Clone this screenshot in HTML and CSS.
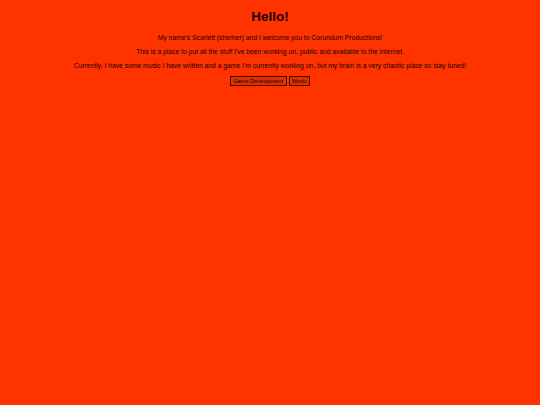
FILE: index.html
```html
<!DOCTYPE html>
<html>
<head>
<meta charset="utf-8">
<title>Corundum Productions</title>
<link rel="stylesheet" href="styles.css">
</head>
<body>
<main class="page">
  <h1 class="title">Hello!</h1>
  <p class="text">My name's Scarlett (she/her) and I welcome you to Corundum Productions!</p>
  <p class="text">This is a place to put all the stuff I've been working on, public and available to the internet.</p>
  <p class="text">Currently, I have some music I have written and a game I'm currently working on, but my brain is a very chaotic place so stay tuned!</p>
  <div class="links">
    <button class="btn">Game Development</button>
    <button class="btn">Music</button>
  </div>
</main>
</body>
</html>
```

FILE: styles.css
```css
html, body {
  background: #ff3300;
}
body {
  margin: 3.375px;
  font-family: "Liberation Sans", Arial, sans-serif;
  color: #1a0000;
  text-align: center;
}
.title {
  font-size: 13.5px;
  font-weight: bold;
  margin: 6px 0 9.5px;
}
.text {
  font-size: 6.75px;
  margin: 7.2px 0;
}
.links {
  display: flex;
  justify-content: center;
  gap: 2px;
}
.btn {
  font-family: "Liberation Sans", Arial, sans-serif;
  font-size: 5.625px;
  padding: 0.75px 2.5px;
  background: #e03000;
  border: 1px solid #400000;
  color: #1a0000;
  border-radius: 0;
}
```
